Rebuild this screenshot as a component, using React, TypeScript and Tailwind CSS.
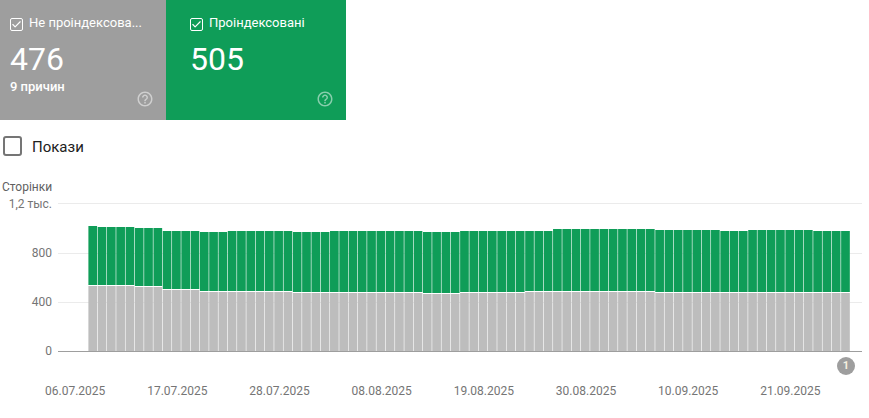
import React from "react";
import { Check } from "lucide-react";

// bar tops in pixels, run-length encoded as [count, y]
const GREEN_TOPS: [number, number][] = [
  [1, 226], [4, 227], [3, 228], [4, 231], [3, 232], [7, 231], [4, 232], [10, 231], [4, 232], [10, 231],
  [11, 229], [7, 230], [3, 231], [7, 230], [4, 231],
];
const GRAY_TOPS: [number, number][] = [
  [5, 285], [3, 286], [4, 289], [10, 291], [14, 292], [4, 293], [7, 292], [14, 291], [21, 292],
];

const expand = (runs: [number, number][]) => runs.flatMap(([n, y]) => Array<number>(n).fill(y));

const greenTops = expand(GREEN_TOPS);
const grayTops = expand(GRAY_TOPS);

const X0 = 88.4;
const STEP = 9.293;
const BASE = 351;
const LEFT = 58;
const TOP = 196;

const bars = Array.from({ length: 82 }, (_, i) => ({
  x: X0 - LEFT + i * STEP,
  green: greenTops[i],
  gray: grayTops[i],
}));

const Tile = ({
  label,
  value,
  sub,
  className,
}: {
  label: string;
  value: string;
  sub?: string;
  className: string;
}) => (
  <div className={`relative h-[120px] pt-[15px] text-white ${className}`}>
    <div className="flex items-start gap-[6px] h-[16px]">
      <span className="mt-[3px] flex w-[13px] h-[13px] shrink-0 items-center justify-center rounded-[2px] border border-white">
        <Check size={11} strokeWidth={2.5} />
      </span>
      <span className="truncate text-[13px] leading-[16px]">{label}</span>
    </div>
    <div className="mt-[9px] text-[32px] leading-[38px]">{value}</div>
    {sub && <div className="mt-[1px] text-[13px] font-medium leading-[16px]">{sub}</div>}
    <svg
      viewBox="0 0 24 24"
      className="absolute right-[12px] bottom-[12px] h-[18px] w-[18px] fill-white/50"
    >
      <path d="M11 18h2v-2h-2v2zm1-16C6.48 2 2 6.48 2 12s4.48 10 10 10 10-4.48 10-10S17.52 2 12 2zm0 18c-4.41 0-8-3.59-8-8s3.59-8 8-8 8 3.59 8 8-3.59 8-8 8zm0-14c-2.21 0-4 1.79-4 4h2c0-1.1.9-2 2-2s2 .9 2 2c0 2-3 1.75-3 5h2c0-2.25 3-2.5 3-5 0-2.21-1.79-4-4-4z" />
    </svg>
  </div>
);

const App = () => {
  return (
    <div className="h-[418px] w-[869px] overflow-hidden bg-white font-['Roboto',sans-serif]">
      <div className="flex">
        <div className="w-[166px]">
          <Tile className="bg-[#9e9e9e] pl-[10px] pr-[22px]" label="Не проіндексова..." value="476" sub="9 причин" />
        </div>
        <div className="w-[180px]">
          <Tile className="bg-[#0f9d58] pl-[24px] pr-[10px]" label="Проіндексовані" value="505" />
        </div>
      </div>

      <div className="mt-[16px] flex h-[20px] items-center pl-[3px]">
        <span className="h-[20px] w-[19px] rounded-[3px] border-2 border-[#757575]" />
        <span className="ml-[10px] pt-[2px] text-[15px] text-[#212121]">Покази</span>
      </div>

      <div className="mt-[24px] pl-[2px] text-[12px] leading-[14px] text-[#5f5f5f]">Сторінки</div>

      <div className="mt-[2px] flex">
        <div className="mt-[1px] flex h-[161px] w-[52px] flex-col justify-between text-right text-[12px] leading-[14px] text-[#757575]">
          <span>1,2 тыс.</span>
          <span>800</span>
          <span>400</span>
          <span>0</span>
        </div>
        <div className="relative ml-[6px] h-[163px] w-[804px]">
          <svg width="804" height="163" className="block">
            {[203.5, 253.5, 302.5].map((y) => (
              <line key={y} x1="0" x2="804" y1={y - TOP} y2={y - TOP} stroke="#ebebeb" />
            ))}
            <line x1="0" x2="804" y1={BASE - TOP + 0.5} y2={BASE - TOP + 0.5} stroke="#9e9e9e" />
            {bars.map((b) => (
              <g key={b.x}>
                <rect x={b.x} y={b.green - TOP} width={STEP - 0.6} height={b.gray - b.green} fill="#0f9d58" />
                <rect x={b.x} y={b.gray - TOP + 1} width={STEP - 0.6} height={BASE - b.gray - 1} fill="#bdbdbd" />
              </g>
            ))}
          </svg>
          <span className="absolute left-[779px] top-[161px] flex h-[18px] w-[18px] items-center justify-center rounded-full bg-[#9e9e9e] text-[11px] font-bold text-[#f5f0e0]">
            1
          </span>
        </div>
      </div>

      <div className="mt-[25px] flex gap-[41.9px] pl-[45px] text-[12px] leading-[14px] text-[#757575]">
        {["06.07.2025", "17.07.2025", "28.07.2025", "08.08.2025", "19.08.2025", "30.08.2025", "10.09.2025", "21.09.2025"].map(
          (d) => (
            <span key={d}>{d}</span>
          ),
        )}
      </div>
    </div>
  );
};

export default App;
